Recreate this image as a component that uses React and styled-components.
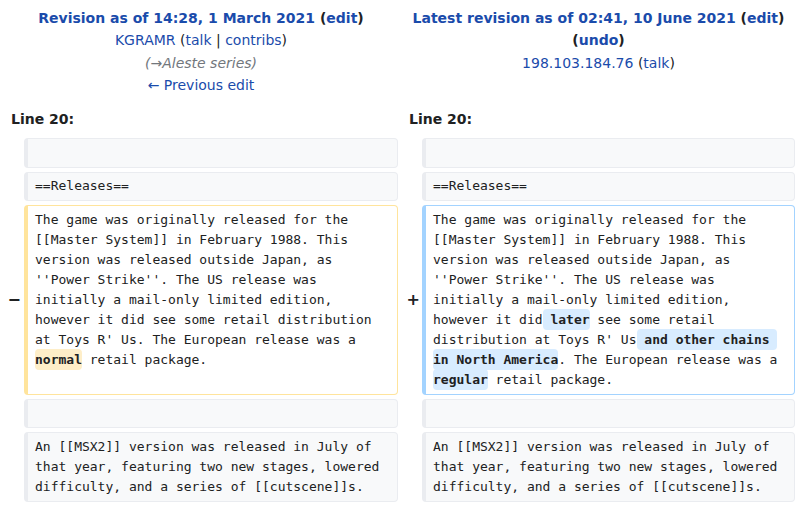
import React from "react";
import styled, { createGlobalStyle, css } from "styled-components";

const GlobalStyle = createGlobalStyle`
  html, body { margin: 0; padding: 0; background: #ffffff; }
  body { font-family: "DejaVu Sans", sans-serif; color: #202122; }
`;

const Diff = styled.div`
  box-sizing: border-box;
  width: 799px;
  padding: 7px 4px 0 8px;
  display: grid;
  grid-template-columns: 16px 374px 24px 373px;
  row-gap: 4px;
  align-items: stretch;
`;

const TitleCell = styled.div`
  grid-column: span 2;
  text-align: center;
  font-family: "DejaVu Sans", sans-serif;
  font-size: 14px;
  line-height: 22.4px;
  color: #202122;
  padding: ${(p) => (p.$side === "left" ? "0 4px 0 0" : "0 0 0 4px")};
`;

const TitleLine = styled.div`
  font-weight: ${(p) => (p.$bold ? "bold" : "normal")};
`;

const Link = styled.a`
  color: #1a4bab;
  text-decoration: none;
  cursor: pointer;
`;

const Comment = styled.div`
  font-style: italic;
  color: #72777d;
`;

const LineNo = styled.div`
  grid-column: span 2;
  font-family: "DejaVu Sans", sans-serif;
  font-size: 14px;
  line-height: 22px;
  font-weight: bold;
  color: #202122;
  padding: 7.4px 0 4px ${(p) => p.$inset}px;
`;

const Marker = styled.div`
  display: flex;
  align-items: center;
  justify-content: flex-end;
  padding-right: ${(p) => (p.$side === "left" ? 3 : 2)}px;
  font-family: "DejaVu Sans", sans-serif;
  font-size: 16px;
  font-weight: bold;
  color: #202122;
`;

const kinds = {
  context: css`
    background: #f8f9fa;
    border-color: #eaecf0;
  `,
  deleted: css`
    background: #ffffff;
    border-color: #ffe49c;
  `,
  added: css`
    background: #ffffff;
    border-color: #a3d3ff;
  `,
};

const Line = styled.div`
  box-sizing: border-box;
  font-family: "DejaVu Sans Mono", "Liberation Mono", monospace;
  font-size: 13px;
  line-height: 20px;
  color: #202122;
  white-space: pre-wrap;
  overflow-wrap: break-word;
  padding: 3.75px 7px;
  border-style: solid;
  border-width: 1px 1px 1px 4px;
  border-radius: 4px;
  ${(p) => kinds[p.$kind]}
`;

const Change = styled.span`
  font-weight: bold;
  border-radius: 4px;
  padding: 3.25px 0;
  -webkit-box-decoration-break: clone;
  box-decoration-break: clone;
  background: ${(p) => (p.$kind === "deleted" ? "#feeec8" : "#d8ecff")};
`;

const contextRows = [
  "",
  "==Releases==",
];

const trailingRows = [
  "",
  "An [[MSX2]] version was released in July of that year, featuring two new stages, lowered difficulty, and a series of [[cutscene]]s.",
];

function ContextRow({ text }) {
  return (
    <>
      <Marker $side="left" />
      <Line $kind="context">{text === "" ? <br /> : text}</Line>
      <Marker $side="right" />
      <Line $kind="context">{text === "" ? <br /> : text}</Line>
    </>
  );
}

export default function App() {
  return (
    <>
      <GlobalStyle />
      <Diff>
        <TitleCell $side="left">
          <TitleLine $bold>
            <Link>Revision as of 14:28, 1 March 2021</Link> (<Link>edit</Link>)
          </TitleLine>
          <TitleLine>
            <Link>KGRAMR</Link> (<Link>talk</Link> | <Link>contribs</Link>)
          </TitleLine>
          <Comment>(→Aleste series)</Comment>
          <TitleLine>
            <Link>← Previous edit</Link>
          </TitleLine>
        </TitleCell>
        <TitleCell $side="right">
          <TitleLine $bold>
            <Link>Latest revision as of 02:41, 10 June 2021</Link> (<Link>edit</Link>) (<Link>undo</Link>)
          </TitleLine>
          <TitleLine>
            <Link>198.103.184.76</Link> (<Link>talk</Link>)
          </TitleLine>
        </TitleCell>

        <LineNo $inset={3}>Line 20:</LineNo>
        <LineNo $inset={11}>Line 20:</LineNo>

        {contextRows.map((t, i) => (
          <ContextRow key={"c" + i} text={t} />
        ))}

        <Marker $side="left">−</Marker>
        <Line $kind="deleted">
          {"The game was originally released for the [[Master System]] in February 1988. This version was released outside Japan, as ''Power Strike''. The US release was initially a mail-only limited edition, however it did see some retail distribution at Toys R' Us. The European release was a "}
          <Change $kind="deleted">normal</Change>
          {" retail package."}
        </Line>
        <Marker $side="right">+</Marker>
        <Line $kind="added">
          {"The game was originally released for the [[Master System]] in February 1988. This version was released outside Japan, as ''Power Strike''. The US release was initially a mail-only limited edition, however it did"}
          <Change $kind="added">{" later"}</Change>
          {" see some retail distribution at Toys R' Us"}
          <Change $kind="added">{" and other chains in North America"}</Change>
          {". The European release was a "}
          <Change $kind="added">regular</Change>
          {" retail package."}
        </Line>

        {trailingRows.map((t, i) => (
          <ContextRow key={"t" + i} text={t} />
        ))}
      </Diff>
    </>
  );
}
